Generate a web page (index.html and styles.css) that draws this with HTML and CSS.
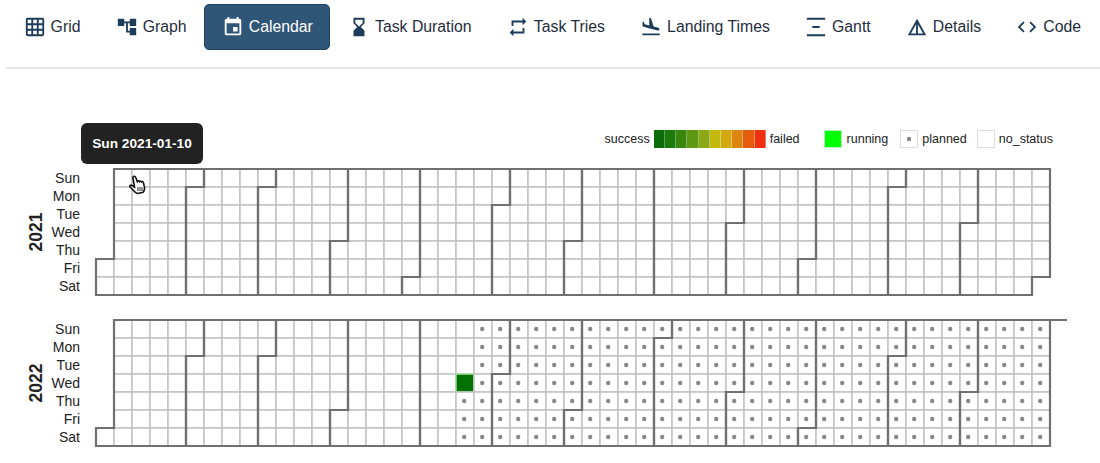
FILE: index.html
```html
<!DOCTYPE html>
<html lang="en">

<head>
  <meta charset="UTF-8">
  <title>Calendar</title>
  <link rel="stylesheet" href="styles.css">
</head>

<body>
  <nav class="tabs">
    <a class="tab tab-grid" href="#">
      <svg class="icon" viewBox="0 0 24 24"><path d="M20 2H4c-1.100 0-2 .9-2 2v16c0 1.100.9 2 2 2h16c1.100 0 2-.9 2-2V4c0-1.100-.9-2-2-2zM8 20H4v-4h4v4zm0-6H4v-4h4v4zm0-6H4V4h4v4zm6 12h-4v-4h4v4zm0-6h-4v-4h4v4zm0-6h-4V4h4v4zm6 12h-4v-4h4v4zm0-6h-4v-4h4v4zm0-6h-4V4h4v4z"/></svg>
      Grid
    </a>
    <a class="tab tab-graph" href="#">
      <svg class="icon" viewBox="0 0 24 24"><path d="M22 11V3h-7v3H9V3H2v8h7V8h2v10h4v3h7v-8h-7v3h-2V8h2v3z"/></svg>
      Graph
    </a>
    <a class="tab tab-active" href="#">
      <svg class="icon" viewBox="0 0 24 24"><path d="M17 12h-5v5h5v-5zM16 1v2H8V1H6v2H5c-1.110 0-1.990.9-1.990 2L3 19c0 1.100.89 2 2 2h14c1.100 0 2-.9 2-2V5c0-1.100-.9-2-2-2h-1V1h-2zm3 18H5V8h14v11z"/></svg>
      Calendar
    </a>
    <a class="tab tab-duration" href="#">
      <svg class="icon" viewBox="0 0 24 24"><path d="M18 22l-.01-6L14 12l3.990-4.010L18 2H6v6l4 4-4 3.990V22h12zM8 7.500V4h8v3.500l-4 4-4-4z"/></svg>
      Task Duration
    </a>
    <a class="tab tab-tries" href="#">
      <svg class="icon" viewBox="0 0 24 24"><path d="M7 7h10v3l4-4-4-4v3H5v6h2V7zm10 10H7v-3l-4 4 4 4v-3h12v-6h-2v4z"/></svg>
      Task Tries
    </a>
    <a class="tab tab-landing" href="#">
      <svg class="icon" viewBox="0 0 24 24"><path d="M2.500 19h19v2h-19zm7.180-5.730l4.350 1.160 5.310 1.420c.8.210 1.620-.26 1.840-1.060.21-.8-.26-1.620-1.060-1.840l-5.310-1.420-2.760-9.020L10.120 2v8.280L5.150 8.950l-.93-2.320-1.450-.39v5.170l1.600.43 5.310 1.430z"/></svg>
      Landing Times
    </a>
    <a class="tab tab-gantt" href="#">
      <svg class="icon" viewBox="0 0 24 24"><path d="M2 2h20v2H2zM8 11h8v2.200H8zM2 20h20v2H2z"/></svg>
      Gantt
    </a>
    <a class="tab tab-details" href="#">
      <svg class="icon" viewBox="0 0 24 24"><path d="M12 3L2 21h20L12 3zm1 5.920L18.600 19H13V8.920zm-2 0V19H5.400L11 8.920z"/></svg>
      Details
    </a>
    <a class="tab tab-code" href="#">
      <svg class="icon" viewBox="0 0 24 24"><path d="M9.400 16.600L4.800 12l4.600-4.600L8 6l-6 6 6 6 1.400-1.400zm5.200 0l4.600-4.600-4.600-4.600L16 6l6 6-6 6-1.400-1.400z"/></svg>
      Code
    </a>
  </nav>

  <main class="chart">
    <div class="legend">
      <span>success</span>
      <span class="scale">
        <i style="background: #0b6b0b"></i>
        <i style="background: #1a7a0c"></i>
        <i style="background: #38870f"></i>
        <i style="background: #5f9812"></i>
        <i style="background: #8ba815"></i>
        <i style="background: #c3b90f"></i>
        <i style="background: #d2a70f"></i>
        <i style="background: #dc8510"></i>
        <i style="background: #e65c0f"></i>
        <i style="background: #ee2f10"></i>
      </span>
      <span>failed</span>
      <span class="swatch swatch-running"></span>
      <span>running</span>
      <span class="swatch swatch-planned"></span>
      <span>planned</span>
      <span class="swatch swatch-none"></span>
      <span>no_status</span>
    </div>

    <div id="years"></div>

    <div class="tooltip">Sun 2021-01-10</div>

    <svg class="cursor" viewBox="0 0 18 20">
      <path d="M4.500 1.500c1-.6 2 0 2.300 1l1.500 4c.5-.9 1.700-.8 2.100 0 .5-.8 1.800-.6 2.100.3.700-.5 1.800 0 2 1l1 4.700c.3 2-.5 3.600-1.400 4.700l-5.600 1.300c-1.600-.3-3-1.800-4.200-3.300L1 11.700c-.6-.9.500-2 1.500-1.400l3 1.900L4 3.200c-.2-.7 0-1.400.5-1.700z"/>
      <path class="cursor-lines" d="M9 12v4M11 12v4M13 12v4"/>
    </svg>
  </main>

  <script src="calendar.js"></script>
</body>

</html>
```

FILE: styles.css
```css
body {
  margin: 0;
  font-family: "Liberation Sans", Arial, sans-serif;
  color: #1f2d3d;
  background-color: white;
  overflow: hidden;
}

.tabs {
  display: flex;
  align-items: center;
  margin-left: 6px;
  padding-top: 4px;
  padding-bottom: 17px;
  border-bottom: 2px solid #e6e6e6;
}

.tab {
  display: flex;
  align-items: center;
  flex-shrink: 0;
  gap: 5px;
  height: 46px;
  box-sizing: border-box;
  padding: 0 17.600px;
  font-size: 15.800px;
  white-space: nowrap;
  color: #1f2d3d;
  text-decoration: none;
  border-radius: 5px;
}

.icon {
  width: 22px;
  height: 22px;
  fill: #1d3b5a;
  flex-shrink: 0;
}

.tab-active {
  padding: 0 16.600px;
  color: white;
  background-color: #2f5577;
  border: 1px solid #20405f;
}

.tab-active .icon {
  fill: white;
}

.chart {
  position: relative;
  padding-top: 61px;
}

.legend {
  display: flex;
  justify-content: flex-end;
  align-items: center;
  gap: 4px;
  height: 18px;
  padding-right: 47px;
  font-size: 12.500px;
  color: #222;
}

.scale {
  display: flex;
  width: 112px;
  height: 18px;
}

.scale i {
  flex: 1;
  border-right: 1px solid rgba(255, 255, 255, 0.35);
}

.swatch {
  width: 18px;
  height: 18px;
  box-sizing: border-box;
  border: 1px solid #ddd;
  background-color: white;
}

.swatch-running {
  margin-left: 20px;
  margin-right: 1px;
  border-color: #b8f5b8;
  background-color: #00ff00;
}

.swatch-planned {
  margin-left: 8px;
  background-image: radial-gradient(circle, #888 2px, transparent 2.500px);
}

.swatch-none {
  margin-left: 6px;
}

#years {
  margin-top: 19px;
}

.year {
  display: block;
  width: 1100px;
  height: 130px;
  margin-bottom: 21px;
  overflow: visible;
}

.day {
  fill: white;
  stroke: #c2c2c2;
  stroke-width: 1.500;
}

.day-running {
  fill: #037203;
  stroke: #9fe09f;
}

.dot {
  fill: #888;
}

.month {
  fill: none;
  stroke: #707070;
  stroke-width: 2.200;
}

.weekday {
  font-size: 14px;
  fill: #222;
  text-anchor: end;
}

.year-label {
  font-size: 17.500px;
  font-weight: bold;
  fill: #222;
  text-anchor: middle;
}

.tooltip {
  position: absolute;
  left: 81px;
  top: 54px;
  width: 122px;
  height: 41px;
  box-sizing: border-box;
  line-height: 41px;
  text-align: center;
  font-size: 13.700px;
  font-weight: bold;
  color: white;
  background-color: #222;
  border-radius: 6px;
}

.cursor {
  position: absolute;
  left: 129px;
  top: 106px;
  width: 18px;
  height: 20px;
  fill: white;
  stroke: #111;
  stroke-width: 1.600;
}

.cursor-lines {
  fill: none;
  stroke-width: 0.900;
}
```

FILE: calendar.js
```js
const cell = 18;
const left = 96;
const top_ = 2;
const days = ['Sun', 'Mon', 'Tue', 'Wed', 'Thu', 'Fri', 'Sat'];
const today = Date.UTC(2022, 4, 18);
const msPerDay = 86400000;

function weekOf(time, year) {
  const jan1 = Date.UTC(year, 0, 1);
  const yday = (time - jan1) / msPerDay;
  return Math.floor((yday + new Date(jan1).getUTCDay()) / 7);
}

function monthPath(year, month) {
  const t0 = Date.UTC(year, month, 1);
  const t1 = Date.UTC(year, month + 1, 1);
  const d0 = new Date(t0).getUTCDay();
  const d1 = new Date(t1).getUTCDay();
  const w0 = weekOf(t0, year);
  const w1 = weekOf(t1, year);
  let d = `M${(w0 + 1) * cell},${d0 * cell}H${w0 * cell}V${7 * cell}H${w1 * cell}`;
  if (d1 == 0) {
    d += `V0H${(w0 + 1) * cell}Z`;
    // year ending on a Saturday leaves a stub on the top edge
    if (month == 11) {
      d += `M${w1 * cell},0H${(w1 + 1) * cell - 1}`;
    }
  } else {
    d += `V${d1 * cell}H${(w1 + 1) * cell}V0H${(w0 + 1) * cell}Z`;
  }
  return d;
}

function drawYear(year) {
  let svg = `<svg class="year" viewBox="0 0 1100 130">`;
  svg += `<text class="year-label" transform="translate(42,${top_ + 63}) rotate(-90)">${year}</text>`;
  days.forEach((name, i) => {
    svg += `<text class="weekday" x="80" y="${top_ + i * cell + 14}">${name}</text>`;
  });

  svg += `<g transform="translate(${left},${top_})">`;
  let dots = '';
  for (let t = Date.UTC(year, 0, 1); t < Date.UTC(year + 1, 0, 1); t += msPerDay) {
    const x = weekOf(t, year) * cell;
    const y = new Date(t).getUTCDay() * cell;
    const running = t == today;
    svg += `<rect class="day${running ? ' day-running' : ''}" x="${x}" y="${y}" width="${cell}" height="${cell}"/>`;
    if (t > today) {
      dots += `<circle class="dot" cx="${x + cell / 2 - 0.8}" cy="${y + cell / 2}" r="2.200"/>`;
    }
  }
  svg += dots;
  for (let m = 0; m < 12; m++) {
    svg += `<path class="month" d="${monthPath(year, m)}"/>`;
  }
  svg += '</g></svg>';
  return svg;
}

document.getElementById('years').innerHTML = drawYear(2021) + drawYear(2022);
```
